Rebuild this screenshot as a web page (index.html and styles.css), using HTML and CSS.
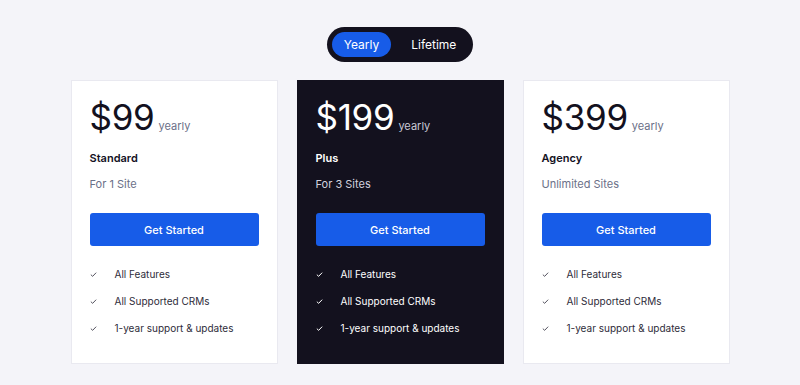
FILE: index.html
```html
<!DOCTYPE html>
<html lang="en">
<head>
    <meta charset="UTF-8">
    <meta name="viewport" content="width=device-width, initial-scale=1.0">
    <title>Pricing</title>
    <link rel="stylesheet" href="styles.css">
</head>
<body>
    <div class="switch-wrap">
        <div class="switch">
            <span class="switch-item active">Yearly</span>
            <span class="switch-item">Lifetime</span>
        </div>
    </div>

    <div class="plans">
        <div class="plan">
            <div class="price">$99<span class="period">yearly</span></div>
            <div class="plan-name">Standard</div>
            <div class="plan-sites">For 1 Site</div>
            <button class="plan-btn">Get Started</button>
            <ul class="features">
                <li><svg class="check" viewBox="0 0 8 6"><path d="M0.8 3.2 L3 5.2 L7.2 0.8"/></svg>All Features</li>
                <li><svg class="check" viewBox="0 0 8 6"><path d="M0.8 3.2 L3 5.2 L7.2 0.8"/></svg>All Supported CRMs</li>
                <li><svg class="check" viewBox="0 0 8 6"><path d="M0.8 3.2 L3 5.2 L7.2 0.8"/></svg>1-year support &amp; updates</li>
            </ul>
        </div>
        <div class="plan dark">
            <div class="price">$199<span class="period">yearly</span></div>
            <div class="plan-name">Plus</div>
            <div class="plan-sites">For 3 Sites</div>
            <button class="plan-btn">Get Started</button>
            <ul class="features">
                <li><svg class="check" viewBox="0 0 8 6"><path d="M0.8 3.2 L3 5.2 L7.2 0.8"/></svg>All Features</li>
                <li><svg class="check" viewBox="0 0 8 6"><path d="M0.8 3.2 L3 5.2 L7.2 0.8"/></svg>All Supported CRMs</li>
                <li><svg class="check" viewBox="0 0 8 6"><path d="M0.8 3.2 L3 5.2 L7.2 0.8"/></svg>1-year support &amp; updates</li>
            </ul>
        </div>
        <div class="plan">
            <div class="price">$399<span class="period">yearly</span></div>
            <div class="plan-name">Agency</div>
            <div class="plan-sites">Unlimited Sites</div>
            <button class="plan-btn">Get Started</button>
            <ul class="features">
                <li><svg class="check" viewBox="0 0 8 6"><path d="M0.8 3.2 L3 5.2 L7.2 0.8"/></svg>All Features</li>
                <li><svg class="check" viewBox="0 0 8 6"><path d="M0.8 3.2 L3 5.2 L7.2 0.8"/></svg>All Supported CRMs</li>
                <li><svg class="check" viewBox="0 0 8 6"><path d="M0.8 3.2 L3 5.2 L7.2 0.8"/></svg>1-year support &amp; updates</li>
            </ul>
        </div>
    </div>
</body>
</html>
```

FILE: styles.css
```css
body {
    margin: 0;
    background: #f4f4f9;
    font-family: Inter, "Liberation Sans", sans-serif;
    color: #13111e;
}

.switch-wrap {
    display: flex;
    justify-content: center;
    padding-top: 27px;
    margin-bottom: 18px;
}

.switch {
    display: flex;
    align-items: center;
    gap: 8px;
    background: #13111e;
    border-radius: 18px;
    padding: 5px;
}

.switch-item {
    height: 25px;
    line-height: 25px;
    padding: 0 12px;
    border-radius: 13px;
    font-size: 12px;
    color: #fff;
}

.switch-item.active {
    background: #175ce8;
}

.plans {
    display: flex;
    justify-content: center;
    gap: 19px;
}

.plan {
    width: 169px;
    background: #fff;
    border: 1px solid #e9e9f0;
    padding: 16px 18px 22px 18px;
}

.plan.dark {
    background: #13111e;
    border-color: #13111e;
    color: #fff;
}

.price {
    font-size: 35px;
    line-height: 40px;
    font-weight: 400;
    letter-spacing: -0.3px;
}

.period {
    font-size: 11px;
    letter-spacing: 0;
    color: #6b7088;
    margin-left: 4px;
}

.dark .period {
    color: #c9c9d6;
}

.plan-name {
    margin-top: 5px;
    font-size: 11px;
    font-weight: 600;
}

.plan-sites {
    margin-top: 12px;
    font-size: 11px;
    color: #6b7088;
}

.dark .plan-sites {
    color: #d2d2de;
}

.plan-btn {
    display: block;
    width: 100%;
    height: 33px;
    margin-top: 22px;
    border: none;
    border-radius: 3px;
    background: #175ce8;
    color: #fff;
    font-family: inherit;
    font-size: 11px;
    font-weight: 500;
}

.features {
    list-style: none;
    margin: 14px 0 0 0;
    padding: 0;
}

.features li {
    display: flex;
    align-items: center;
    height: 27px;
    font-size: 10px;
    color: #2e2c3a;
}

.dark .features li {
    color: #fff;
}

.check {
    width: 7px;
    height: 5px;
    margin: 2px 18px 0 0;
    fill: none;
    stroke: #55535f;
    stroke-width: 1.2;
}

.dark .check {
    stroke: #fff;
}
```
